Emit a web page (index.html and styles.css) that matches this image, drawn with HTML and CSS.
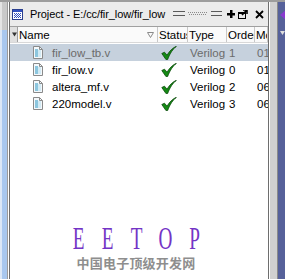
FILE: index.html
```html
<!DOCTYPE html>
<html>
<head>
<meta charset="utf-8">
<link rel="stylesheet" href="styles.css">
</head>
<body>
<div class="screen">
  <div class="leftedge">
    <div class="le-top"></div>
    <div class="le-bottom"></div>
  </div>
  <div class="panel">
    <div class="titlebar">
      <svg class="ticon" width="11" height="11" viewBox="0 0 11 11">
        <rect x="0.5" y="0.5" width="10" height="10" fill="#fff" stroke="#2a3f8f"/>
        <rect x="1" y="1" width="9" height="2" fill="#3050c0"/>
        <g fill="#3050c0">
          <rect x="2" y="4" width="1" height="1"/><rect x="4" y="4" width="1" height="1"/><rect x="6" y="4" width="1" height="1"/><rect x="8" y="4" width="1" height="1"/>
          <rect x="3" y="5" width="1" height="1"/><rect x="5" y="5" width="1" height="1"/><rect x="7" y="5" width="1" height="1"/>
          <rect x="2" y="6" width="1" height="1"/><rect x="4" y="6" width="1" height="1"/><rect x="6" y="6" width="1" height="1"/><rect x="8" y="6" width="1" height="1"/>
          <rect x="3" y="7" width="1" height="1"/><rect x="5" y="7" width="1" height="1"/><rect x="7" y="7" width="1" height="1"/>
          <rect x="2" y="8" width="1" height="1"/><rect x="4" y="8" width="1" height="1"/><rect x="6" y="8" width="1" height="1"/><rect x="8" y="8" width="1" height="1"/>
        </g>
      </svg>
      <span class="ttext">Project - E:/cc/fir_low/fir_low</span>
      <svg class="grip" width="53" height="8" viewBox="0 0 53 8">
        <g fill="#5a5a5a">
          <rect x="2" y="1" width="12" height="1"/><rect x="2" y="5" width="12" height="1"/>
          <rect x="40" y="1" width="11" height="1"/><rect x="40" y="5" width="11" height="1"/>
        </g>
        <g fill="#8a8a8a">
          <rect x="17" y="2" width="1" height="1"/><rect x="19" y="2" width="1" height="1"/><rect x="21" y="2" width="1" height="1"/><rect x="23" y="2" width="1" height="1"/><rect x="25" y="2" width="1" height="1"/><rect x="27" y="2" width="1" height="1"/><rect x="29" y="2" width="1" height="1"/><rect x="31" y="2" width="1" height="1"/><rect x="33" y="2" width="1" height="1"/><rect x="35" y="2" width="1" height="1"/>
          <rect x="18" y="4" width="1" height="1"/><rect x="20" y="4" width="1" height="1"/><rect x="22" y="4" width="1" height="1"/><rect x="24" y="4" width="1" height="1"/><rect x="26" y="4" width="1" height="1"/><rect x="28" y="4" width="1" height="1"/><rect x="30" y="4" width="1" height="1"/><rect x="32" y="4" width="1" height="1"/><rect x="34" y="4" width="1" height="1"/>
        </g>
      </svg>
      <svg class="tbtn plus" width="8" height="8" viewBox="0 0 8 8">
        <rect x="3" y="0" width="2.5" height="8" fill="#000"/>
        <rect x="0" y="3" width="8" height="2.5" fill="#000"/>
      </svg>
      <svg class="tbtn restore" width="10" height="9" viewBox="0 0 10 9">
        <rect x="0.5" y="2.5" width="7" height="6" fill="none" stroke="#000"/>
        <rect x="1" y="3" width="6" height="1" fill="#000"/>
        <path d="M4 5 L9 0 M5 0 H9 V4" stroke="#000" stroke-width="1.6" fill="none"/>
      </svg>
      <svg class="tbtn close" width="9" height="9" viewBox="0 0 9 9">
        <path d="M1 1 L8 8 M8 1 L1 8" stroke="#000" stroke-width="1.8"/>
      </svg>
    </div>
    <div class="header">
      <div class="hcell hbox">
        <svg width="6" height="5" viewBox="0 0 6 5"><path d="M0 0 H6 L3 5 Z" fill="#333"/></svg>
      </div>
      <div class="hcell hname"><span>Name</span>
        <svg class="sortarrow" width="7" height="6" viewBox="0 0 7 6"><path d="M0.5 0.5 H6.5 L3.5 5.5 Z" fill="none" stroke="#8a8a8a"/></svg>
      </div>
      <div class="hcell">Status</div>
      <div class="hcell">Type</div>
      <div class="hcell">Order</div>
      <div class="hcell">Mo</div>
    </div>
    <div class="rows">
      <div class="row selected">
        <div></div>
        <div class="name"><svg class="fileicon" width="10" height="13" viewBox="0 0 10 13"><path d="M0.5 0.5 H6.5 L9.5 3.5 V12.5 H0.5 Z" fill="#f4f8fb" stroke="#8a8a8a"/><rect x="2" y="3" width="3" height="8" fill="#8cc6de"/><rect x="5" y="4" width="3" height="7" fill="#d2eaf4"/><path d="M6.5 0.5 V3.5 H9.5" fill="none" stroke="#8a8a8a"/></svg>fir_low_tb.v</div>
        <div class="status"><svg class="check" width="16" height="14" viewBox="0 0 16 14"><path d="M0.8 7.5 L3.5 6.2 L6 9.2 C8.5 5 11.5 2 15.5 0.2 C12 3 9 7 6.6 13.6 L5 13.6 Z" fill="#148a14" stroke="#0a4a0a" stroke-width="0.8" stroke-linejoin="round"/></svg></div>
        <div class="cell">Verilog</div>
        <div class="cell">1</div>
        <div class="cell">01</div>
      </div>
      <div class="row">
        <div></div>
        <div class="name"><svg class="fileicon" width="10" height="13" viewBox="0 0 10 13"><path d="M0.5 0.5 H6.5 L9.5 3.5 V12.5 H0.5 Z" fill="#f4f8fb" stroke="#8a8a8a"/><rect x="2" y="3" width="3" height="8" fill="#8cc6de"/><rect x="5" y="4" width="3" height="7" fill="#d2eaf4"/><path d="M6.5 0.5 V3.5 H9.5" fill="none" stroke="#8a8a8a"/></svg>fir_low.v</div>
        <div class="status"><svg class="check" width="16" height="14" viewBox="0 0 16 14"><path d="M0.8 7.5 L3.5 6.2 L6 9.2 C8.5 5 11.5 2 15.5 0.2 C12 3 9 7 6.6 13.6 L5 13.6 Z" fill="#148a14" stroke="#0a4a0a" stroke-width="0.8" stroke-linejoin="round"/></svg></div>
        <div class="cell">Verilog</div>
        <div class="cell">0</div>
        <div class="cell">01</div>
      </div>
      <div class="row">
        <div></div>
        <div class="name"><svg class="fileicon" width="10" height="13" viewBox="0 0 10 13"><path d="M0.5 0.5 H6.5 L9.5 3.5 V12.5 H0.5 Z" fill="#f4f8fb" stroke="#8a8a8a"/><rect x="2" y="3" width="3" height="8" fill="#8cc6de"/><rect x="5" y="4" width="3" height="7" fill="#d2eaf4"/><path d="M6.5 0.5 V3.5 H9.5" fill="none" stroke="#8a8a8a"/></svg>altera_mf.v</div>
        <div class="status"><svg class="check" width="16" height="14" viewBox="0 0 16 14"><path d="M0.8 7.5 L3.5 6.2 L6 9.2 C8.5 5 11.5 2 15.5 0.2 C12 3 9 7 6.6 13.6 L5 13.6 Z" fill="#148a14" stroke="#0a4a0a" stroke-width="0.8" stroke-linejoin="round"/></svg></div>
        <div class="cell">Verilog</div>
        <div class="cell">2</div>
        <div class="cell">06</div>
      </div>
      <div class="row">
        <div></div>
        <div class="name"><svg class="fileicon" width="10" height="13" viewBox="0 0 10 13"><path d="M0.5 0.5 H6.5 L9.5 3.5 V12.5 H0.5 Z" fill="#f4f8fb" stroke="#8a8a8a"/><rect x="2" y="3" width="3" height="8" fill="#8cc6de"/><rect x="5" y="4" width="3" height="7" fill="#d2eaf4"/><path d="M6.5 0.5 V3.5 H9.5" fill="none" stroke="#8a8a8a"/></svg>220model.v</div>
        <div class="status"><svg class="check" width="16" height="14" viewBox="0 0 16 14"><path d="M0.8 7.5 L3.5 6.2 L6 9.2 C8.5 5 11.5 2 15.5 0.2 C12 3 9 7 6.6 13.6 L5 13.6 Z" fill="#148a14" stroke="#0a4a0a" stroke-width="0.8" stroke-linejoin="round"/></svg></div>
        <div class="cell">Verilog</div>
        <div class="cell">3</div>
        <div class="cell">06</div>
      </div>
    </div>
    <div class="watermark">
      <div class="eetop"><span>E</span><span>E</span><span>T</span><span>O</span><span>P</span></div>
      <div class="cn">中国电子顶级开发网</div>
    </div>
  </div>
  <div class="rightedge">
    <div class="re-line"></div>
    <div class="re-gray"></div>
    <div class="re-line2"></div>
    <div class="re-blue">
      <svg class="picon" width="7" height="12" viewBox="0 0 7 12"><path d="M7 0 L0 6 L7 12 Z" fill="#8a3ad0"/></svg>
      <svg class="rtri" width="5" height="4" viewBox="0 0 5 4"><path d="M0 0 H5 L2.5 4 Z" fill="#ddd"/></svg>
    </div>
  </div>
</div>
</body>
</html>
```

FILE: styles.css
```css
html, body {
  margin: 0;
  padding: 0;
  background: #fff;
}
.screen {
  width: 285px;
  height: 279px;
  overflow: hidden;
  display: flex;
  font-family: "Liberation Sans", Arial, sans-serif;
  font-size: 11px;
  color: #000;
  border-top: 2px solid #9c9c9c;
  box-sizing: border-box;
}
.leftedge {
  width: 10px;
  flex: none;
  display: flex;
  flex-direction: column;
}
.le-top {
  height: 28px;
  background: linear-gradient(to right, #e4e4e4 0 2px, #c9c9c9 2px 7px, #9a9a9a 7px 8px, #ffffff 8px 9px, #6e6e6e 9px 10px);
}
.le-bottom {
  flex: 1;
  background: linear-gradient(to right, #dbe7f6 0 2px, #a8c7ee 2px 7px, #9a9a9a 7px 8px, #ffffff 8px 9px, #6e6e6e 9px 10px);
}
.panel {
  width: 258px;
  flex: none;
  display: flex;
  flex-direction: column;
  background: #fff;
  overflow: hidden;
}
.titlebar {
  height: 24px;
  background: #ebebeb;
  display: flex;
  align-items: center;
  padding-left: 2px;
  box-sizing: border-box;
  flex: none;
}
.ticon {
  flex: none;
  margin-top: 1px;
}
.ttext {
  margin-left: 7px;
  width: 140px;
  flex: none;
  font-size: 11px;
  letter-spacing: -0.1px;
  white-space: nowrap;
  overflow: hidden;
  color: #000;
}
.grip {
  margin-left: 1px;
  flex: none;
}
.tbtn {
  flex: none;
}
.plus {
  margin-left: 3px;
}
.restore {
  margin-left: 3px;
}
.close {
  margin-left: 7px;
}
.header {
  height: 17px;
  display: grid;
  grid-template-columns: 8px 140px 30px 39px 28px 13px;
  border-top: 1px solid #a0a0a0;
  border-bottom: 1px solid #d8d8d8;
  background: #fafafa;
  box-sizing: border-box;
  flex: none;
}
.hcell {
  border-right: 1px solid #c8c8c8;
  overflow: hidden;
  white-space: nowrap;
  display: flex;
  align-items: center;
  padding-left: 1px;
  font-size: 11.5px;
}
.hbox {
  padding-left: 2px;
  background: #e0e0e0;
  border-right: 1px solid #a0a0a0;
}
.hname {
  justify-content: space-between;
  padding-right: 3px;
}
.sortarrow {
  flex: none;
}
.rows {
  padding-top: 1px;
  flex: none;
}
.row {
  height: 17px;
  display: grid;
  grid-template-columns: 8px 140px 30px 39px 28px 13px;
  align-items: center;
  white-space: nowrap;
}
.row > div {
  overflow: hidden;
}
.row.selected {
  background: #c6d1dd;
  color: #6b6b6b;
}
.name {
  display: flex;
  align-items: center;
  padding-left: 15px;
  font-size: 11.5px;
}
.fileicon {
  margin-right: 9px;
  flex: none;
}
.status {
  display: flex;
  align-items: center;
  padding-left: 3px;
}
.cell {
  padding-left: 2px;
  font-size: 11.5px;
}
.watermark {
  margin-top: 114px;
  display: flex;
  flex-direction: column;
  align-items: center;
  padding-right: 6px;
}
.eetop {
  display: flex;
  color: #7434c6;
  font-family: "Liberation Serif", "Times New Roman", serif;
  font-size: 31px;
  line-height: 26px;
  height: 26px;
}
.eetop span {
  width: 29px;
  text-align: center;
  transform: scaleX(0.62);
}
.cn {
  margin-top: 4px;
  font-family: "Noto Sans CJK SC", sans-serif;
  font-size: 13px;
  line-height: 14px;
  font-weight: bold;
  color: #8e8e8e;
  letter-spacing: 0.2px;
}
.rightedge {
  flex: 1;
  display: flex;
}
.re-line {
  width: 1px;
  background: #6e6e6e;
  border-right: 1px solid #fff;
}
.re-gray {
  width: 7px;
  background: #d0d0d0;
}
.re-line2 {
  width: 1px;
  background: #8a8a8a;
}
.re-blue {
  flex: 1;
  background: #56619a;
  display: flex;
  flex-direction: column;
  align-items: flex-start;
  padding-left: 1px;
}
.picon {
  margin-top: 7px;
  margin-left: 1px;
}
.rtri {
  margin-top: 10px;
  margin-left: 1px;
}
```
